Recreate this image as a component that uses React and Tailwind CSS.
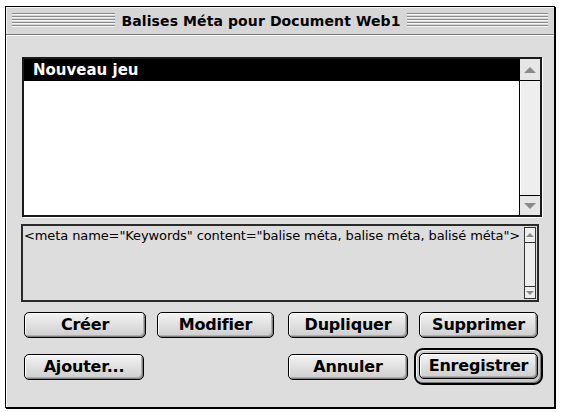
import React from "react";

const font = { fontFamily: '"DejaVu Sans", "Liberation Sans", sans-serif' };

const MacButton = ({ label, className = "" }) => (
  <div
    className={`h-[26px] flex items-center justify-center rounded-[5px] border border-black bg-gradient-to-b from-[#f4f4f4] to-[#cdcdcd] shadow-[inset_1px_1px_0_#ffffff,inset_-1px_-1px_0_#7e7e7e,inset_-2px_-2px_0_#b0b0b0] text-[16px] font-bold text-black leading-none tracking-[-0.2px] ${className}`}
  >
    {label}
  </div>
);

const Stripes = ({ className = "" }) => (
  <div className={`h-[15px] bg-[repeating-linear-gradient(to_bottom,#8a8a8a_0px,#8a8a8a_1px,#f6f6f6_1px,#f6f6f6_2px,#d6d6d6_2px,#d6d6d6_3px)] ${className}`} />
);

const UpArrow = ({ size = 6, color = "#8a8a8a" }) => (
  <div
    className="w-0 h-0"
    style={{
      borderLeft: `${size}px solid transparent`,
      borderRight: `${size}px solid transparent`,
      borderBottom: `${size}px solid ${color}`,
    }}
  />
);

const DownArrow = ({ size = 6, color = "#8a8a8a" }) => (
  <div
    className="w-0 h-0"
    style={{
      borderLeft: `${size}px solid transparent`,
      borderRight: `${size}px solid transparent`,
      borderTop: `${size}px solid ${color}`,
    }}
  />
);

export default function App() {
  return (
    <div className="w-[562px] h-[412px] bg-white overflow-hidden" style={font}>
      <div className="ml-[5px] mt-[6px] w-[550px] h-[402px] border border-black shadow-[1px_1px_0_#000] bg-[#dddddd] flex flex-col">
        {/* title bar */}
        <div className="h-[28px] shrink-0 flex items-center px-[6px] bg-[#d6d6d6] border-b border-[#7a7a7a] shadow-[inset_1px_1px_0_#f4f4f4]">
          <Stripes className="w-[103px] shrink-0" />
          <span className="flex-1 text-center text-[14px] font-bold text-black leading-none tracking-[0.1px] whitespace-nowrap">
            Balises Méta pour Document Web1
          </span>
          <Stripes className="w-[141px] shrink-0" />
        </div>

        {/* content */}
        <div className="flex-1 flex flex-col pl-[15px] pt-[21px] border-l border-t border-white">
          {/* list box */}
          <div className="w-[520px] h-[160px] border-2 border-[#1a1a1a] flex bg-white shadow-[1px_1px_0_#fff]">
            <div className="flex-1">
              <div className="h-[22px] bg-black text-white text-[15px] font-bold flex items-center pl-[9px] leading-none">
                Nouveau jeu
              </div>
            </div>
            <div className="w-[21px] border-l border-black bg-[#eeeeee] flex flex-col">
              <div className="h-[22px] border-b border-black flex items-center justify-center bg-[#e6e6e6]">
                <UpArrow size={6} />
              </div>
              <div className="flex-1 bg-[#eeeeee] border-l border-white" />
              <div className="h-[20px] border-t border-black flex items-center justify-center bg-[#e6e6e6]">
                <DownArrow size={6} />
              </div>
            </div>
          </div>

          {/* meta text area */}
          <div className="ml-[-1px] mt-[7px] w-[518px] h-[78px] border-2 border-[#2a2a2a] bg-[#dddddd] flex">
            <div className="flex-1 pl-[1px] pt-[2px] text-[13px] text-black leading-[15px] whitespace-nowrap overflow-hidden tracking-[-0.1px]">
              {'<meta name="Keywords" content="balise méta, balise méta, balisé méta">'}
            </div>
            <div className="w-[12px] my-[1px] mr-[1px] border border-[#333] bg-[#eeeeee] flex flex-col">
              <div className="h-[15px] border-b border-[#333] flex items-center justify-center">
                <UpArrow size={4} />
              </div>
              <div className="flex-1" />
              <div className="h-[12px] border-t border-[#333] flex items-center justify-center">
                <DownArrow size={4} />
              </div>
            </div>
          </div>

          {/* row 1 */}
          <div className="flex mt-[10px]">
            <MacButton label="Créer" className="ml-[2px] w-[122px]" />
            <MacButton label="Modifier" className="ml-[11px] w-[117px]" />
            <MacButton label="Dupliquer" className="ml-[14px] w-[120px]" />
            <MacButton label="Supprimer" className="ml-[11px] w-[119px]" />
          </div>

          {/* row 2 */}
          <div className="flex items-center mt-[10px] h-[37px]">
            <MacButton label="Ajouter..." className="ml-[2px] w-[120px]" />
            <MacButton label="Annuler" className="ml-[144px] w-[120px]" />
            <div className="ml-[6px] w-[129px] h-[37px] rounded-[9px] border-2 border-black bg-[#c8c8c8] shadow-[inset_1px_1px_0_#f4f4f4,inset_-1px_-1px_0_#777] p-[3px] flex">
              <MacButton label="Enregistrer" className="w-full" />
            </div>
          </div>
        </div>
      </div>
    </div>
  );
}
